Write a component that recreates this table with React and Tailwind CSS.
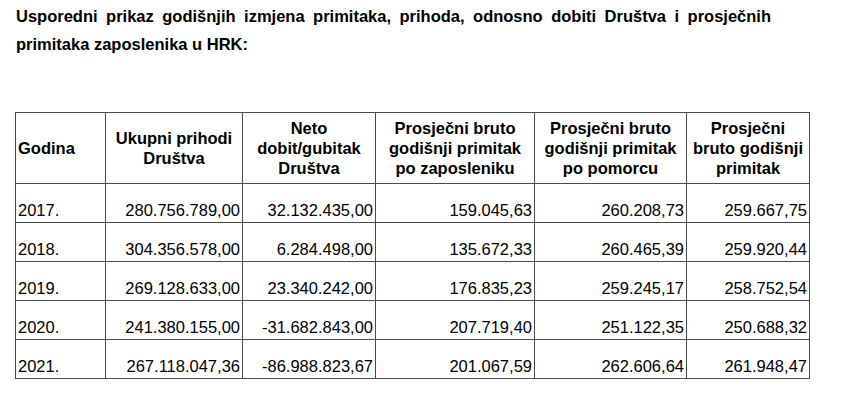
const headers = [
  { label: 'Godina', width: 'w-[90px]', align: 'text-left' },
  { label: 'Ukupni prihodi Društva', width: 'w-[137px]', align: 'text-center' },
  { label: 'Neto dobit/gubitak Društva', width: 'w-[133px]', align: 'text-center' },
  { label: 'Prosječni bruto godišnji primitak po zaposleniku', width: 'w-[159px]', align: 'text-center' },
  { label: 'Prosječni bruto godišnji primitak po pomorcu', width: 'w-[152px]', align: 'text-center' },
  { label: 'Prosječni bruto godišnji primitak', width: 'w-[123px]', align: 'text-center' },
];

const rows = [
  ['2017.', '280.756.789,00', '32.132.435,00', '159.045,63', '260.208,73', '259.667,75'],
  ['2018.', '304.356.578,00', '6.284.498,00', '135.672,33', '260.465,39', '259.920,44'],
  ['2019.', '269.128.633,00', '23.340.242,00', '176.835,23', '259.245,17', '258.752,54'],
  ['2020.', '241.380.155,00', '-31.682.843,00', '207.719,40', '251.122,35', '250.688,32'],
  ['2021.', '267.118.047,36', '-86.988.823,67', '201.067,59', '262.606,64', '261.948,47'],
];

export default function App() {
  return (
    <div className="w-[847px] h-[414px] bg-white text-black font-['Liberation_Sans',Arial,sans-serif] text-[16.5px] overflow-hidden">
      {/* Intro paragraph */}
      <p className="ml-[16px] w-[755px] pt-[2px] font-bold leading-[28px] text-justify">
        Usporedni prikaz godišnjih izmjena primitaka, prihoda, odnosno dobiti Društva i prosječnih
        primitaka zaposlenika u HRK:
      </p>

      {/* Table */}
      <table className="ml-[15px] mt-[54px] table-fixed border-collapse border border-[#4a4a4a]">
        <thead>
          <tr className="h-[71px]">
            {headers.map((h) => (
              <th
                key={h.label}
                className={`${h.width} ${h.align} border border-[#4a4a4a] px-[2px] align-middle font-bold leading-[20px]`}
              >
                {h.label}
              </th>
            ))}
          </tr>
        </thead>
        <tbody>
          {rows.map((row) => (
            <tr key={row[0]} className="h-[39px]">
              {row.map((cell, i) => (
                <td
                  key={i}
                  className={`border border-[#4a4a4a] px-[2px] pb-[2px] align-bottom leading-[19px] ${
                    i === 0 ? 'text-left' : 'text-right'
                  }`}
                >
                  {cell}
                </td>
              ))}
            </tr>
          ))}
        </tbody>
      </table>
    </div>
  );
}
